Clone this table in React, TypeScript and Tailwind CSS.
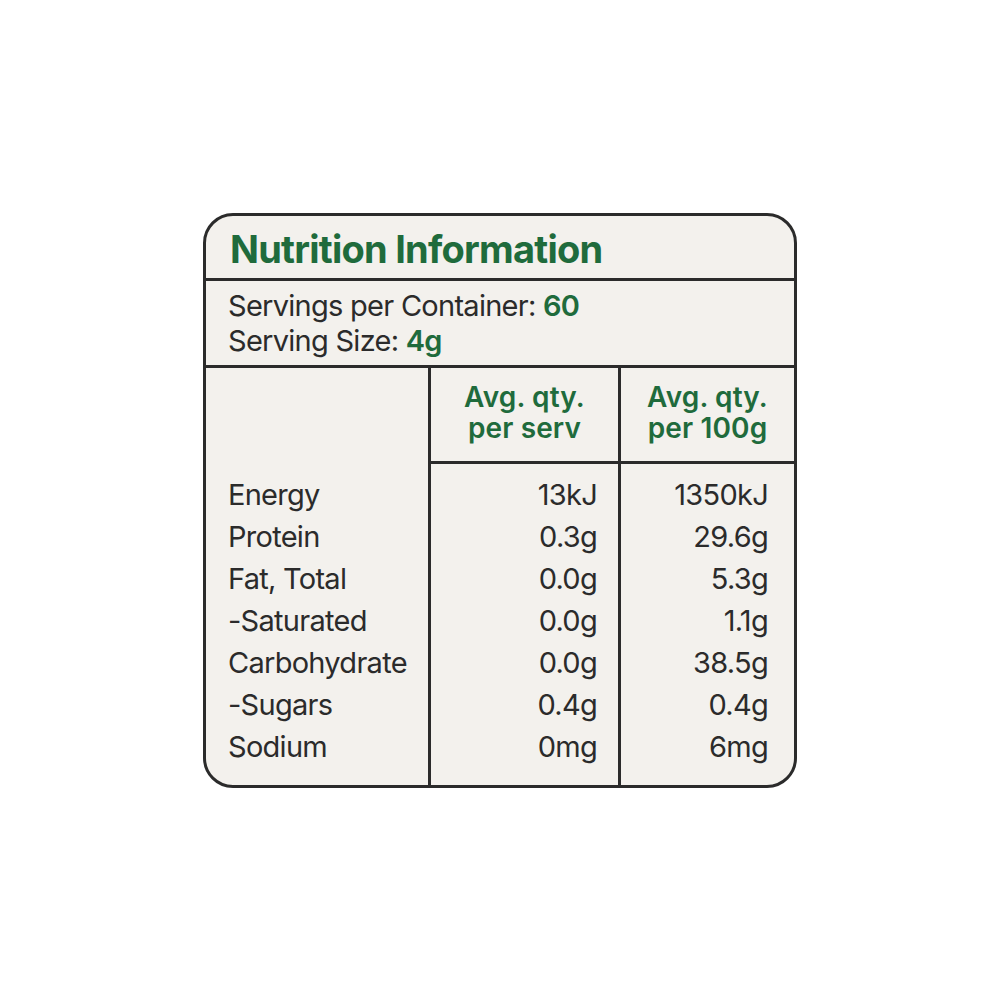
import React from "react";

const rows: [string, string, string][] = [
  ["Energy", "13kJ", "1350kJ"],
  ["Protein", "0.3g", "29.6g"],
  ["Fat, Total", "0.0g", "5.3g"],
  ["-Saturated", "0.0g", "1.1g"],
  ["Carbohydrate", "0.0g", "38.5g"],
  ["-Sugars", "0.4g", "0.4g"],
  ["Sodium", "0mg", "6mg"],
];

export default function App() {
  return (
    <div
      className="w-full h-[1000px] bg-white flex items-center justify-center"
      style={{ fontFamily: "Inter, 'Noto Sans', sans-serif" }}
    >
      <div className="w-[594px] h-[575px] border-[3px] border-[#2b2b2b] rounded-[30px] bg-[#f3f1ed] overflow-hidden flex flex-col text-[#2b2b2b]">
        <div className="h-[65px] border-b-[3px] border-[#2b2b2b] flex items-center pl-[24px] pt-[4px]">
          <span className="text-[38px] font-bold tracking-[-0.02em] text-[#1f6b3c] leading-none">
            Nutrition Information
          </span>
        </div>
        <div className="h-[87px] border-b-[3px] border-[#2b2b2b] flex flex-col justify-center pl-[22px] text-[29px] leading-[35px] tracking-[-0.025em]">
          <div>
            Servings per Container: <span className="font-semibold text-[#1f6b3c]">60</span>
          </div>
          <div>
            Serving Size: <span className="font-semibold text-[#1f6b3c]">4g</span>
          </div>
        </div>
        <div className="flex-1 grid grid-cols-[225px_190px_1fr]">
          <div className="border-r-[3px] border-[#2b2b2b] flex flex-col">
            <div className="h-[96px]"></div>
            <div className="pt-[10px] pl-[22px] flex flex-col">
              {rows.map((r) => (
                <div key={r[0]} className="h-[42px] flex items-center text-[29px] tracking-[-0.025em]">
                  {r[0]}
                </div>
              ))}
            </div>
          </div>
          <div className="border-r-[3px] border-[#2b2b2b] flex flex-col">
            <div className="h-[96px] border-b-[3px] border-[#2b2b2b] flex flex-col items-center justify-center text-[28px] font-semibold text-[#1f6b3c] leading-[31px] tracking-[0.005em] pb-[2px]">
              <div>Avg. qty.</div>
              <div>per serv</div>
            </div>
            <div className="pt-[10px] pr-[21px] flex flex-col items-end">
              {rows.map((r) => (
                <div key={r[0]} className="h-[42px] flex items-center text-[29px] tracking-[-0.025em]">
                  {r[1]}
                </div>
              ))}
            </div>
          </div>
          <div className="flex flex-col">
            <div className="h-[96px] border-b-[3px] border-[#2b2b2b] flex flex-col items-center justify-center text-[28px] font-semibold text-[#1f6b3c] leading-[31px] tracking-[0.005em] pb-[2px]">
              <div>Avg. qty.</div>
              <div>per 100g</div>
            </div>
            <div className="pt-[10px] pr-[26px] flex flex-col items-end">
              {rows.map((r) => (
                <div key={r[0]} className="h-[42px] flex items-center text-[29px] tracking-[-0.025em]">
                  {r[2]}
                </div>
              ))}
            </div>
          </div>
        </div>
      </div>
    </div>
  );
}
